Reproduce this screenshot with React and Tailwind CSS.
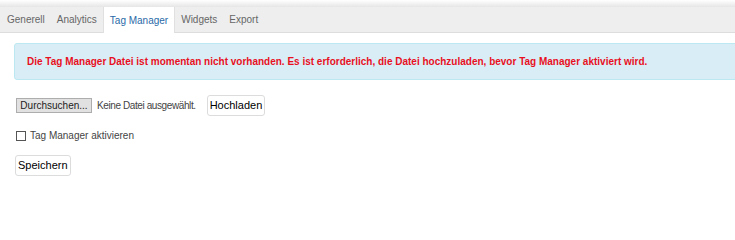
const tabs = ["Generell", "Analytics", "Tag Manager", "Widgets", "Export"];

export default function App() {
  return (
    <div className="w-[735px] h-[200px] overflow-hidden bg-white text-[10px] text-[#555]" style={{ fontFamily: '"Liberation Sans", Arial, sans-serif' }}>
      {/* top shade + tab bar */}
      <div className="h-[7px] bg-gradient-to-b from-white to-[#e6e6e6]" />
      <div className="flex h-[26px] bg-[#eeeeee] border-b border-[#dddddd] pl-px">
        {tabs.map((t) =>
          t === "Tag Manager" ? (
            <div key={t} className="px-[6px] h-[26px] flex items-center bg-white text-[#2a6aa8] border-l border-r border-[#e0e0e0] -mb-px">
              {t}
            </div>
          ) : (
            <div key={t} className="px-[6px] h-[25px] flex items-center text-[#666]">
              {t}
            </div>
          )
        )}
      </div>

      {/* alert */}
      <div className="ml-[14px] mt-[10px] w-[740px] h-[37px] flex items-center pl-3 bg-[#d9edf7] border border-[#bce8f1] rounded-[3px]">
        <span className="font-bold text-[#e8101e] text-[10px]">
          Die Tag Manager Datei ist momentan nicht vorhanden. Es ist erforderlich, die Datei hochzuladen, bevor Tag Manager aktiviert wird.
        </span>
      </div>

      {/* upload */}
      <div className="flex items-center ml-4 mt-[15px]">
        <button className="h-[15px] w-[76px] flex items-center justify-center bg-[#e1e1e1] border border-[#adadad] text-[10px] text-[#222] leading-none">
          Durchsuchen...
        </button>
        <span className="ml-[5px] text-[#444] tracking-[-0.4px]">Keine Datei ausgewählt.</span>
        <button className="ml-[11px] h-[21px] px-[2px] bg-white border border-[#dcdcdc] rounded-[3px] text-[11px] text-black">
          Hochladen
        </button>
      </div>

      <label className="flex items-center ml-4 mt-[12px] text-[#444]">
        <span className="w-[10px] h-[10px] border border-[#555] bg-white" />
        <span className="ml-[4px]">Tag Manager aktivieren</span>
      </label>

      <button className="ml-[15px] mt-[12px] h-[21px] px-[2px] bg-white border border-[#dcdcdc] rounded-[3px] text-[11px] text-black">
        Speichern
      </button>
    </div>
  );
}
